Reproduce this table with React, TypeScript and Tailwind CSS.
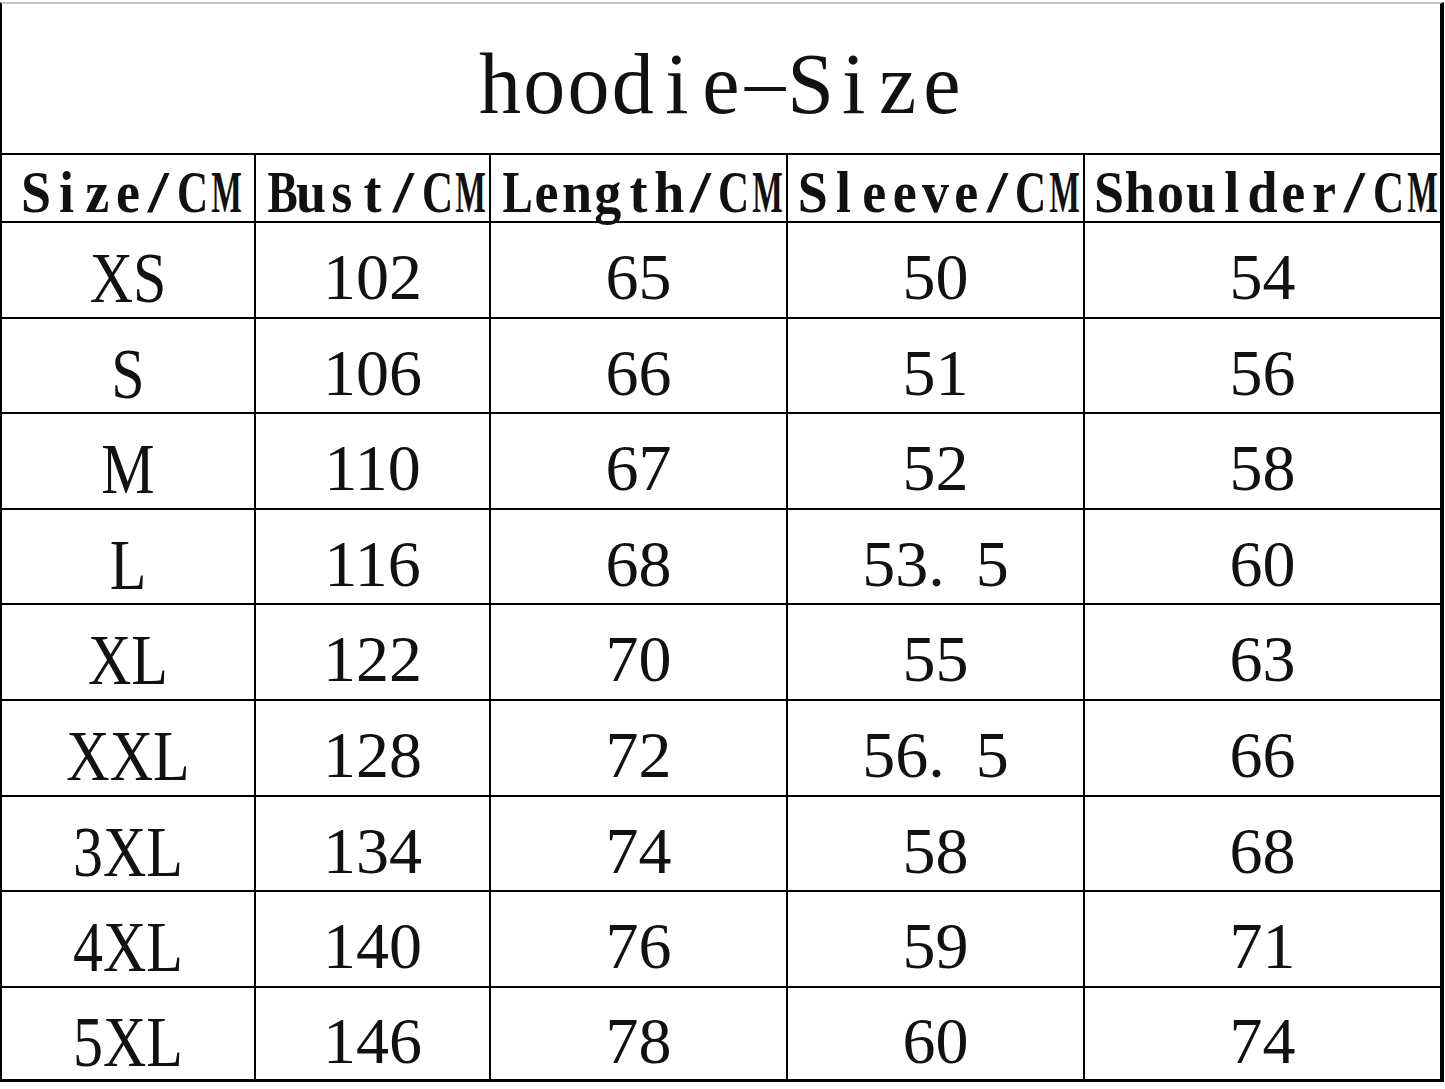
const rows = [
  ["XS", "102", "65", "50", "54"],
  ["S", "106", "66", "51", "56"],
  ["M", "110", "67", "52", "58"],
  ["L", "116", "68", "53.5", "60"],
  ["XL", "122", "70", "55", "63"],
  ["XXL", "128", "72", "56.5", "66"],
  ["3XL", "134", "74", "58", "68"],
  ["4XL", "140", "76", "59", "71"],
  ["5XL", "146", "78", "60", "74"],
];

const headers = ["Size/CM", "Bust/CM", "Length/CM", "Sleeve/CM", "Shoulder/CM"];

// row heights incl. bottom border, so the lines land where the chart has them
const rowHeights = [
  "h-[96px] border-b-2",
  "h-[95px] border-b-2",
  "h-[96px] border-b-2",
  "h-[95px] border-b-2",
  "h-[96px] border-b-2",
  "h-[96px] border-b-2",
  "h-[95px] border-b-2",
  "h-[96px] border-b-2",
  "h-[91px]",
];

const cols = "grid grid-cols-[254px_235px_297px_297px_355px]";

// the chart's header font is a fixed-pitch serif; squeeze the wide glyphs into the cell
const headerSqueeze: Record<string, string> = {
  M: "scale-x-[0.6]",
  C: "scale-x-[0.8]",
  B: "scale-x-[0.84]",
  L: "scale-x-[0.84]",
  "/": "scale-x-[1.4]",
};

const titleSqueeze: Record<string, string> = {
  "-": "scale-x-[1.9] scale-y-[0.6]",
};

function Mono({
  text,
  cell,
  squeeze,
}: {
  text: string;
  cell: string;
  squeeze: Record<string, string>;
}) {
  return (
    <span className="inline-flex whitespace-nowrap">
      {text.split("").map((c, i) => (
        <span key={i} className={`${cell} inline-block text-center ${squeeze[c] ?? ""}`}>
          {c}
        </span>
      ))}
    </span>
  );
}

function Value({ v }: { v: string }) {
  if (v.includes(".")) {
    const [a, b] = v.split(".");
    return (
      <>
        {a}.<span className="ml-[31px]">{b}</span>
      </>
    );
  }
  return <>{v}</>;
}

export default function App() {
  return (
    <div className="w-[1445px] h-[1089px] bg-white pt-[2px]">
      <div className="w-[1444px] border-l-2 border-r-4 border-t-2 border-b-[3px] border-black border-t-[#c4c4c4] text-[#111]">
        {/* Title */}
        <div className="h-[151px] border-b-2 border-black flex items-center justify-center">
          <span className="inline-block font-['Liberation_Serif',serif] text-[84px] leading-none scale-y-[1.04] pt-[10px]">
            <Mono text="hoodie-Size" cell="w-[44.2px]" squeeze={titleSqueeze} />
          </span>
        </div>

        {/* Header row */}
        <div className={`${cols} h-[68px] border-b-2 border-black`}>
          {headers.map((h, i) => (
            <div
              key={h}
              className={`flex items-center justify-center border-black ${i < 4 ? "border-r-2" : ""}`}
            >
              <span className="inline-block font-['Liberation_Serif',serif] font-bold text-[54px] leading-none scale-y-[1.1] pt-[7px]">
                <Mono text={h} cell="w-[30.7px]" squeeze={headerSqueeze} />
              </span>
            </div>
          ))}
        </div>

        {/* Body */}
        {rows.map((r, ri) => (
          <div key={r[0]} className={`${cols} ${rowHeights[ri]} border-black`}>
            {r.map((v, i) => (
              <div
                key={i}
                className={`flex items-center justify-center border-black ${i < 4 ? "border-r-2" : ""}`}
              >
                {i === 0 ? (
                  <span className="inline-block font-['Liberation_Serif',serif] text-[60px] leading-none scale-y-[1.2] pt-[14px]">
                    {v}
                  </span>
                ) : (
                  <span className="inline-block font-['Liberation_Serif',serif] text-[66px] leading-none pt-[14px]">
                    <Value v={v} />
                  </span>
                )}
              </div>
            ))}
          </div>
        ))}
      </div>
    </div>
  );
}
